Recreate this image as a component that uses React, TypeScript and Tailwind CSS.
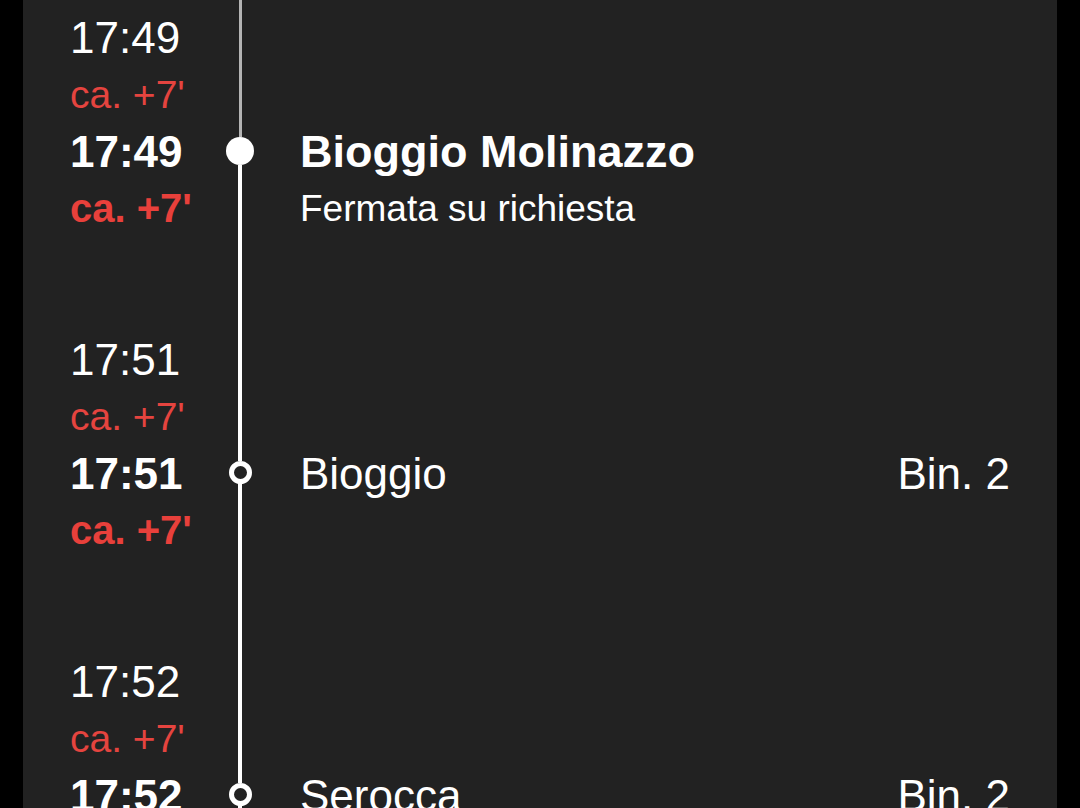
import React from 'react';

type Stop = {
  arrival: string;
  departure: string;
  delay: string;
  name: string;
  note?: string;
  platform?: string;
  current?: boolean;
};

const stops: Stop[] = [
  {
    arrival: '17:49',
    departure: '17:49',
    delay: "ca. +7'",
    name: 'Bioggio Molinazzo',
    note: 'Fermata su richiesta',
    current: true,
  },
  { arrival: '17:51', departure: '17:51', delay: "ca. +7'", name: 'Bioggio', platform: 'Bin. 2' },
  { arrival: '17:52', departure: '17:52', delay: "ca. +7'", name: 'Serocca', platform: 'Bin. 2' },
];

const StopRow: React.FC<{ stop: Stop }> = ({ stop }) => {
  return (
    <div className="flex h-[322px] shrink-0">
      {/* Times */}
      <div className="w-[156px] shrink-0 pt-[9px]">
        <div className="h-[57px] leading-[57px] text-[44px] text-white">{stop.arrival}</div>
        <div className="h-[57px] leading-[57px] text-[39px] text-[#e5443f]">{stop.delay}</div>
        <div className="h-[57px] leading-[57px] text-[44px] font-bold text-white">{stop.departure}</div>
        <div className="h-[57px] leading-[57px] text-[40px] font-bold text-[#e8403b]">{stop.delay}</div>
      </div>

      {/* Rail */}
      <div className="flex w-[28px] shrink-0 flex-col items-center">
        {stop.current ? (
          <>
            <div className="h-[137px] w-[3px] bg-[#b4b4b4]" />
            <div className="h-[28px] w-[28px] rounded-full bg-white" />
          </>
        ) : (
          <>
            <div className="h-[139px] w-[4px] bg-white" />
            <div className="h-[23px] w-[23px] rounded-full border-[5px] border-white bg-[#222222]" />
          </>
        )}
        <div className="w-[4px] flex-1 bg-white" />
      </div>

      {/* Station */}
      <div className="ml-[46px] min-w-0 flex-1 pt-[123px]">
        <div className="flex h-[57px] items-center justify-between leading-[57px]">
          <span className={stop.current ? 'text-[45px] font-bold text-white' : 'text-[44px] text-white'}>
            {stop.name}
          </span>
          {stop.platform && <span className="text-[44px] text-white">{stop.platform}</span>}
        </div>
        {stop.note && <div className="h-[57px] leading-[57px] text-[37px] text-white">{stop.note}</div>}
      </div>
    </div>
  );
};

export default function App() {
  return (
    <div
      className="h-[808px] overflow-hidden bg-black"
      style={{ fontFamily: '"Liberation Sans", Arial, sans-serif' }}
    >
      <div className="mx-[23px] flex h-full flex-col overflow-hidden bg-[#222222] px-[47px]">
        {stops.map((stop) => (
          <StopRow key={stop.name} stop={stop} />
        ))}
      </div>
    </div>
  );
}
